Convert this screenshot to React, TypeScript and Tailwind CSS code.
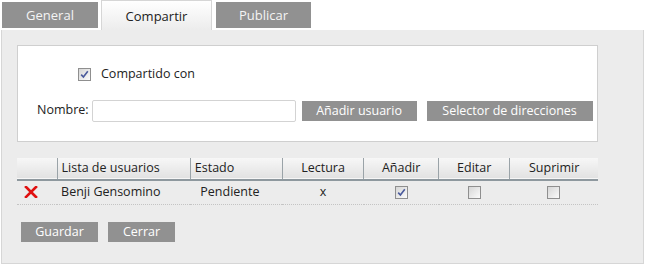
import React from "react";

// ========================================
// SMALL PIECES
// ========================================

function Check({ checked }: { checked?: boolean }) {
  return (
    <span className="inline-flex h-[13px] w-[13px] items-center justify-center border border-[#8f8f8f] bg-gradient-to-br from-[#d6d6d6] to-[#fbfbfb] align-middle">
      {checked && (
        <svg width="9" height="9" viewBox="0 0 9 9">
          <path d="M1.2 4.6 L3.4 7 L7.8 1.2" fill="none" stroke="#4a5a9c" strokeWidth="1.6" />
        </svg>
      )}
    </span>
  );
}

function GrayButton({ label, className = "" }: { label: string; className?: string }) {
  return (
    <button className={`h-[20px] bg-[#919191] text-[12.5px] leading-[20px] text-white ${className}`}>
      {label}
    </button>
  );
}

const headers = [
  { label: "", w: "w-[40px]" },
  { label: "Lista de usuarios", w: "w-[133px]", left: true },
  { label: "Estado", w: "w-[92px]", left: true },
  { label: "Lectura", w: "w-[81px]" },
  { label: "Añadir", w: "w-[75px]" },
  { label: "Editar", w: "w-[71px]" },
  { label: "Suprimir", w: "w-[88px]" },
];

// ========================================
// COMPONENT
// ========================================

export default function App() {
  return (
    <div
      className="h-[266px] w-[646px] bg-white text-[12.5px] text-[#222]"
      style={{ fontFamily: '"Open Sans", "DejaVu Sans", sans-serif' }}
    >
      {/* Tabs */}
      <div className="flex h-[30px] items-end pl-[2px]">
        <div className="mb-[2px] flex h-[26px] w-[96px] items-center justify-center bg-[#919191] pt-[1px] text-[13px] text-[#f4f4f4]">
          General
        </div>
        <div className="relative ml-[3px] flex h-[30px] w-[111px] items-center justify-center border-x border-t border-[#d6d6d6] bg-gradient-to-b from-white to-[#ececec] pt-[3px] text-[13px] text-[#222]">
          Compartir
        </div>
        <div className="mb-[2px] ml-[4px] flex h-[26px] w-[95px] items-center justify-center bg-[#919191] pt-[1px] text-[13px] text-[#f4f4f4]">
          Publicar
        </div>
      </div>

      {/* Panel */}
      <div className="ml-[1px] h-[234px] w-[643px] border border-t-0 border-[#d6d6d6] bg-[#ececec] pl-[15px] pt-[15px]">
        <div className="h-[97px] w-[581px] border border-[#cfcfcf] bg-white">
          <div className="flex items-center pl-[60px] pt-[19px]">
            <Check checked />
            <span className="ml-[10px]">Compartido con</span>
          </div>
          <div className="mt-[16px] flex items-center pl-[19px]">
            <span>Nombre:</span>
            <input className="ml-[3px] h-[22px] w-[204px] rounded-[2px] border border-[#d3d3d3] bg-white" />
            <GrayButton label="Añadir usuario" className="ml-[6px] w-[115px]" />
            <GrayButton label="Selector de direcciones" className="ml-[10px] w-[166px]" />
          </div>
        </div>

        <table className="mt-[16px] w-[581px] table-fixed border-collapse">
          <thead>
            <tr className="h-[22px] border-b-2 border-[#8e989e] bg-gradient-to-b from-[#f7f7f7] to-[#e2e2e2]">
              {headers.map((h, i) => (
                <th
                  key={i}
                  className={`${h.w} border-l border-[#9aa3a8] px-[4px] font-normal first:border-l-0 ${h.left ? "text-left" : "text-center"}`}
                >
                  {h.label}
                </th>
              ))}
            </tr>
          </thead>
          <tbody>
            <tr className="h-[24px] border-b border-dotted border-[#c4c4c4]">
              <td className="pl-[7px]">
                <svg width="14" height="12" viewBox="0 0 14 12">
                  <path d="M2 1 L12 11 M12 1 L2 11" stroke="#e01010" strokeWidth="2.6" strokeLinecap="square" />
                </svg>
              </td>
              <td className="px-[4px]">Benji Gensomino</td>
              <td className="pl-[10px]">Pendiente</td>
              <td className="text-center">x</td>
              <td className="text-center"><Check checked /></td>
              <td className="text-center"><Check /></td>
              <td className="text-center"><Check /></td>
            </tr>
          </tbody>
        </table>

        <div className="mt-[17px] flex pl-[4px]">
          <GrayButton label="Guardar" className="w-[77px]" />
          <GrayButton label="Cerrar" className="ml-[10px] w-[67px]" />
        </div>
      </div>
    </div>
  );
}
